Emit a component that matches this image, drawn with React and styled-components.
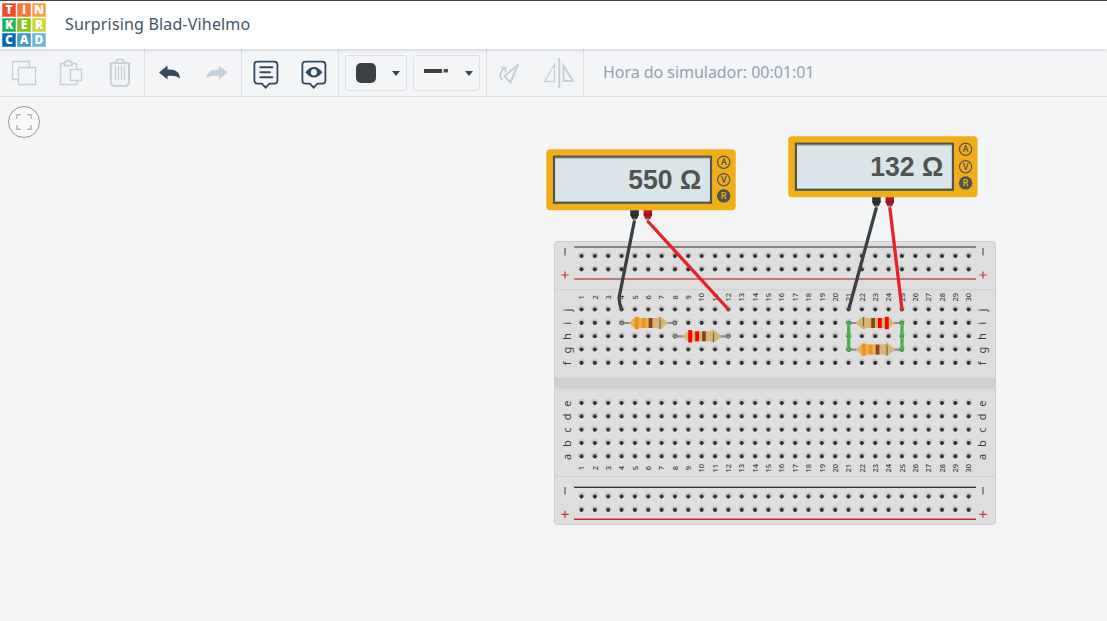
import React from "react";
import styled, { createGlobalStyle } from "styled-components";

const GlobalStyle = createGlobalStyle`
  *, *::before, *::after { box-sizing: border-box; }
  html, body { margin: 0; height: 100%; overflow: hidden; }
  body { background: #f3f5f7; font-family: "Noto Sans", "Open Sans", sans-serif; }
`;

const Page = styled.div`
  display: flex;
  flex-direction: column;
  width: 100%;
  height: 621px;
`;

const Header = styled.header`
  display: flex;
  align-items: center;
  height: 49px;
  flex: none;
  padding-left: 2px;
  background: #fff;
  border-top: 1px solid #47474b;
  box-shadow: 0 1px 3px rgba(60, 75, 95, 0.22);
  z-index: 1;
`;

const Logo = styled.div`
  display: grid;
  grid-template-columns: repeat(3, 14px);
  grid-auto-rows: 14px;
  gap: 1px;
  margin-bottom: 1px;
`;

const Tile = styled.span`
  display: flex;
  align-items: center;
  justify-content: center;
  background: ${(p) => p.$color};
  border: 1px solid rgba(255, 255, 255, 0.28);
  color: #fff;
  font: 800 12px/12px "Open Sans", sans-serif;
`;

const Title = styled.h1`
  margin: 0 0 2px 19px;
  color: #3f546a;
  font-size: 16px;
  font-weight: 400;
  letter-spacing: ${(p) => p.$spacing};
  white-space: nowrap;
`;

const Toolbar = styled.nav`
  display: flex;
  flex: none;
  height: 48px;
  border-bottom: 1px solid #dce0e5;
  box-shadow: 0 1px 0 #fcfdfd;
`;

const Group = styled.div`
  display: flex;
  align-items: center;
  gap: ${(p) => p.$gap || 0}px;
  padding: 0 ${(p) => p.$pad || 0}px;
  border-right: 1px solid #dce1e6;
`;

const ToolButton = styled.button`
  width: 48px;
  height: 47px;
  padding: 0;
  border: 0;
  background: none;
  color: ${(p) => (p.$active ? "#34495e" : "#c6d0da")};
  svg { display: block; }
`;

const Picker = styled.button`
  display: flex;
  align-items: center;
  justify-content: space-between;
  width: ${(p) => p.$width}px;
  height: 36px;
  padding: 1px 6px 0 10px;
  border: 1px solid #dce1e6;
  border-radius: 3px;
  background: none;
`;

const Swatch = styled.span`
  width: 20px;
  height: 20px;
  border-radius: 5px;
  background: #3c4043;
`;

const WireSample = styled.span`
  display: flex;
  align-items: center;
  gap: 1px;
  margin-bottom: 4px;
  &::before { content: ""; width: 18px; height: 4px; background: #3c4043; }
  &::after { content: ""; width: 5px; height: 4px; background: #4a4d50; border: solid #a9adb0; border-width: 0 0 1px 1px; }
`;

const Caret = styled.span`
  border: 4px solid transparent;
  border-top: 5px solid #34495e;
  border-bottom: 0;
`;

const Clock = styled.div`
  align-self: center;
  margin: 0 0 1px 19px;
  color: #8ea2b5;
  font-size: 16px;
  letter-spacing: -0.04px;
  white-space: nowrap;
`;

const Workspace = styled.main`
  flex: 1;
  position: relative;
  background: #f3f5f7;
`;

const FitButton = styled.button`
  display: grid;
  place-items: center;
  width: 32px;
  height: 32px;
  margin: 9px 0 0 8px;
  padding: 0;
  border: 1px solid #999;
  border-radius: 50%;
  background: #f8f9fa;
`;

const Circuit = styled.svg`
  position: absolute;
  left: 540px;
  top: 33px;
`;

const tiles = [
  ["T", "#fa4528"], ["I", "#fd7137"], ["N", "#fd9b3f"],
  ["K", "#1eb158"], ["E", "#85c40f"], ["R", "#d0d42e"],
  ["C", "#0068b6"], ["A", "#4298d0"], ["D", "#68b6df"],
];

const Glyph = ({ children }) => (
  <svg width="48" height="47" viewBox="0 0 48 47" fill="none" stroke="currentColor">{children}</svg>
);

const CopyIcon = () => (
  <Glyph>
    <path d="M18 30.500H12.500V12.500H29.500V18M18.500 18.500H35.500V35.500H18.500Z" strokeWidth="1.300" />
  </Glyph>
);
const PasteIcon = () => (
  <Glyph>
    <path d="M16.500 14.500H12.500V35.500H29V32M24 14.500H28.500V20M22.500 20.500H33.500V31.500H22.500Z" strokeWidth="1.400" />
    <path d="M16.500 13V16.500H24V13H22V11.500H18.500V13Z" strokeWidth="1.600" />
  </Glyph>
);
const TrashIcon = () => (
  <Glyph>
    <path d="M14.800 15V33Q15 37 18.500 37H29Q33 37 33 33V15" strokeWidth="2" />
    <path d="M13.500 14.200H34.500" strokeWidth="2" />
    <path d="M20 14Q20 10.500 22 10.500H26Q28 10.500 28 14" strokeWidth="1.400" />
    <path d="M19.500 17V31M22.500 17V31M25.500 17V31M28.500 17V31" strokeWidth="1.200" />
  </Glyph>
);
const arrow = "M14 23.500 22.500 16.500V20.500C30 20 35 23 35 29.500C31.500 26.500 27 26.500 22.500 27V30.500Z";
const UndoIcon = () => <Glyph><path d={arrow} fill="currentColor" stroke="none" /></Glyph>;
const RedoIcon = () => (
  <Glyph><path d={arrow} transform="translate(48.500 0) scale(-1 1)" fill="currentColor" stroke="none" /></Glyph>
);
const bubble = "M15.500 12.300H33Q36 12.300 36 15.300V31.500Q36 34.300 33 34.300H28L24.300 38.300 20.500 34.300H16Q13 34.300 13 31.500V15.300Q13 12.300 16 12.300Z";
const NotesIcon = () => (
  <Glyph>
    <g transform="translate(-.6 .3)">
      <path d={bubble} strokeWidth="1.800" />
      <path d="M19 18H31M19 23H28.500M19 28H31" strokeWidth="2.100" strokeLinecap="round" />
    </g>
  </Glyph>
);
const EyeIcon = () => (
  <Glyph>
    <g transform="translate(-.6 .3)">
      <path d={bubble} strokeWidth="1.800" />
      <path fillRule="evenodd" d="M16 23Q24.500 12.500 33 23Q24.500 33.500 16 23ZM21.500 23A3 3.200 0 1 0 27.500 23A3 3.200 0 1 0 21.500 23Z" fill="currentColor" stroke="none" />
    </g>
  </Glyph>
);
const RotateIcon = () => (
  <Glyph>
    <path d="M31 15.500 17.500 27.300 23.500 33.500Z" strokeWidth="2" strokeLinejoin="round" />
    <path d="M15.500 31.500Q10 25 18 18.500M14 18.500H18.500V23.500" strokeWidth="1.700" />
  </Glyph>
);
const MirrorIcon = () => (
  <Glyph>
    <path d="M19.500 15.500V32.500H9.500Z" strokeWidth="1.300" />
    <path d="M24.200 9V39" strokeWidth="2" />
    <path d="M28.500 16.500V32H38Z" strokeWidth="2" />
  </Glyph>
);

const colX = (i) => 581.5 + (i - 1) * 13.35;
const columns = Array.from({ length: 30 }, (_, i) => i + 1);
const rows = [
  ["j", 309.5], ["i", 322.9], ["h", 336.2], ["g", 349.5], ["f", 362.9],
  ["e", 403.1], ["d", 416.4], ["c", 429.7], ["b", 443.1], ["a", 456.4],
];
const railRows = [256.1, 269.4, 496.6, 509.9];

const Hole = ({ x, y }) => (
  <g>
    <circle cx={x} cy={y - 0.7} r="3.300" fill="#c6c6c6" />
    <path d={`M${x - 3.2} ${y + 0.6}A3.300 3.300 0 0 0 ${x + 3.2} ${y + 0.6}Z`} fill="#e9e9e9" />
    <circle cx={x} cy={y} r="2.050" fill="#343434" />
  </g>
);

const Label = styled.text`
  font-family: "Noto Sans", sans-serif;
  font-size: ${(p) => p.$size}px;
  font-weight: ${(p) => p.$weight || 400};
  fill: #3c3c3c;
  text-anchor: middle;
`;

const Turned = ({ x, y, size, weight, children }) => (
  <Label $size={size} $weight={weight} transform={`translate(${x} ${y}) rotate(-90)`}>{children}</Label>
);

const RailMarks = ({ x, minus, plus }) => (
  <g>
    <path d={`M${x} ${minus - 3.7}V${minus + 3.7}`} stroke="#555" strokeWidth="1.200" />
    <path d={`M${x - 3.7} ${plus}H${x + 3.7}M${x} ${plus - 3.5}V${plus + 3.5}`} stroke="#c9353a" strokeWidth="1.200" />
  </g>
);

const Breadboard = () => (
  <g>
    <rect x="554.500" y="241.500" width="441" height="283" rx="3" fill="#dedede" stroke="#cdcdcd" />
    <path d="M555 289.800H995M555 476.500H995" stroke="#cfcfcf" />
    <path d="M555 377.700H995V388.600H555Z" fill="#d0d0d0" />
    <path d="M574 247H976" stroke="#666669" strokeWidth="1.700" />
    <path d="M574 279H976" stroke="#bd5656" strokeWidth="1.700" />
    <path d="M574 486.500H976" stroke="#a2a2a4" />
    <path d="M574 487.500H976" stroke="#38383b" strokeWidth="1.200" />
    <path d="M574 519.300H976" stroke="#b92b2f" strokeWidth="1.600" />
    {[565, 983].map((x) => (
      <g key={x}>
        <RailMarks x={x} minus={251.700} plus={275} />
        <RailMarks x={x} minus={490.700} plus={514.300} />
      </g>
    ))}
    {columns.map((c) => (
      <g key={c}>
        {railRows.map((y) => <Hole key={y} x={colX(c)} y={y} />)}
        {rows.map(([n, y]) => <Hole key={n} x={colX(c)} y={y} />)}
        <Turned x={colX(c) + 2.7} y={297.300} size={7.5} weight={500}>{c}</Turned>
        <Turned x={colX(c) + 2.7} y={468.200} size={7.5} weight={500}>{c}</Turned>
      </g>
    ))}
    {rows.map(([n, y]) => (
      <g key={n}>
        <Turned x={570.500} y={y + 0.5} size={11}>{n}</Turned>
        <Turned x={986} y={y + 0.5} size={11}>{n}</Turned>
      </g>
    ))}
  </g>
);

const Resistor = ({ x, y, bands, flip }) => (
  <g transform={`translate(${x} ${y})${flip ? " rotate(180)" : ""}`}>
    <path d="M-26.500 0H26.500" stroke="#8b8b8b" strokeWidth="2.200" />
    <circle cx="-26.500" r="1.900" fill="#999" stroke="#606060" strokeWidth="1" />
    <circle cx="26.500" r="1.900" fill="#999" stroke="#606060" strokeWidth="1" />
    <path d="M-19.500 0 -14-5Q-12-6.500-10-5.600L-8-5H8L10-5.600Q12-6.500 14-5L20 0 14 5Q12 6.500 10 5.600L8 5H-8L-10 5.600Q-12 6.500-14 5Z" fill="#d9b474" />
    <path d="M-13.500-6.200H-9.600V6.200H-13.500Z" fill={bands[0]} />
    <path d="M-6.500-5H-2.700V5H-6.500Z" fill={bands[1]} />
    <path d="M.4-5H4.100V5H.4Z" fill="#8b4513" />
    <path d="M11.800-6V6" stroke="#756638" strokeWidth="1.200" />
    <path d="M11.800-6V-3" stroke="#cdb93c" strokeWidth="1.200" />
  </g>
);

const Dial = ({ y, letter, on }) => (
  <g>
    <circle cx="177.400" cy={y} r="6.100" fill={on ? "#50544f" : "none"} stroke="#50544f" strokeWidth="1.200" />
    <text x="177.400" y={y + 3.1} textAnchor="middle" fontFamily="Roboto, sans-serif" fontWeight="500" fontSize="9" fill={on ? "#f2ae1b" : "#50544f"}>{letter}</text>
  </g>
);

const Multimeter = ({ x, y, value }) => (
  <g transform={`translate(${x} ${y})`}>
    <rect width="189.400" height="61" rx="4" fill="#f2ae18" />
    <rect x="7.700" y="7.500" width="157" height="46" fill="#dae5e9" stroke="#50544f" strokeWidth="2.200" />
    <path d="M9 9H163.800" stroke="#9ca4a6" />
    <text x="155" y="40" textAnchor="end" textLength="73" lengthAdjust="spacingAndGlyphs" fontFamily="Liberation Sans, sans-serif" fontWeight="700" fontSize="28.500" fill="#50544f">{value}</text>
    <Dial y={13} letter="A" />
    <Dial y={30.500} letter="V" />
    <Dial y={46.700} letter="R" on />
    <path d="M84 61H92.500V66L90.500 70H86L84 66Z" fill="#303030" />
    <path d="M97.300 61H105.800V66L103.800 70H99.300L97.300 66Z" fill="#ae181d" />
    <path d="M84 65.500H92.500M97.300 65.500H105.800" stroke="#222" strokeOpacity=".45" />
    <path d="M88.200 69V73M101.500 69V73" stroke="#888" strokeWidth="2.400" />
  </g>
);

const Lead = ({ d, color }) => (
  <path d={d} fill="none" stroke={color} strokeWidth="3.300" strokeLinecap="round" strokeLinejoin="round" />
);

export default function App() {
  return (
    <Page>
      <GlobalStyle />
      <Header>
        <Logo>{tiles.map(([l, c]) => <Tile key={l} $color={c}>{l}</Tile>)}</Logo>
        <Title $spacing="0.17px">Surprising Blad-Vihelmo</Title>
      </Header>
      <Toolbar>
        <Group>
          <ToolButton><CopyIcon /></ToolButton>
          <ToolButton><PasteIcon /></ToolButton>
          <ToolButton><TrashIcon /></ToolButton>
        </Group>
        <Group>
          <ToolButton $active><UndoIcon /></ToolButton>
          <ToolButton><RedoIcon /></ToolButton>
        </Group>
        <Group>
          <ToolButton $active><NotesIcon /></ToolButton>
          <ToolButton $active><EyeIcon /></ToolButton>
        </Group>
        <Group $gap={6} $pad={6}>
          <Picker $width={62}><Swatch /><Caret /></Picker>
          <Picker $width={67}><WireSample /><Caret /></Picker>
        </Group>
        <Group>
          <ToolButton><RotateIcon /></ToolButton>
          <ToolButton><MirrorIcon /></ToolButton>
        </Group>
        <Clock>Hora do simulador: 00:01:01</Clock>
      </Toolbar>
      <Workspace>
        <FitButton>
          <svg width="16" height="16" viewBox="0 0 16 16" fill="none" stroke="#b9bcbf" strokeWidth="1.500">
            <path d="M.8 5V.8H5M11 .8H15.200V5M15.200 11V15.200H11M5 15.200H.8V11" />
          </svg>
        </FitButton>
        <Circuit width="460" height="400" viewBox="540 130 460 400">
          <Breadboard />
          <Resistor x={648.3} y={323} bands={["#ff9100", "#ff9100"]} />
          <Resistor x={701.7} y={336.3} bands={["#f00", "#f00"]} />
          <Resistor x={875.3} y={323} bands={["#f00", "#f00"]} flip />
          <Resistor x={875.3} y={349.6} bands={["#ff9100", "#ff9100"]} />
          <path d="M848.700 323V349.500M902 323V349.500" stroke="#42b649" strokeWidth="3.300" strokeLinecap="round" />
          <Multimeter x={546.3} y={149.2} value="550 Ω" />
          <Multimeter x={788.2} y={136.2} value="132 Ω" />
          <Lead d="M634.200 222 619.200 297Q618.800 302 621.500 309.500" color="#3c4043" />
          <Lead d="M648.500 222 728.500 309.500" color="#e62226" />
          <Lead d="M876 209 848.700 309.500" color="#3c4043" />
          <Lead d="M890 209 902 309.500" color="#e62226" />
        </Circuit>
      </Workspace>
    </Page>
  );
}
